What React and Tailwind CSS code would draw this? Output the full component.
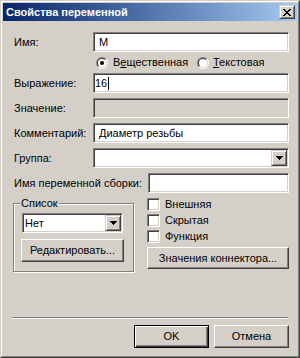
import React from "react";

const sunken =
  "border border-t-[#808080] border-l-[#808080] border-r-white border-b-white shadow-[inset_1px_1px_0_#404040,inset_-1px_-1px_0_#d4d0c8]";
const raised =
  "border border-t-white border-l-white border-r-[#404040] border-b-[#404040] shadow-[inset_-1px_-1px_0_#808080]";

function CloseGlyph() {
  const r = [
    [0, 0], [1, 0], [6, 0], [7, 0],
    [1, 1], [2, 1], [5, 1], [6, 1],
    [2, 2], [3, 2], [4, 2], [5, 2],
    [3, 3], [4, 3],
    [2, 4], [3, 4], [4, 4], [5, 4],
    [1, 5], [2, 5], [5, 5], [6, 5],
    [0, 6], [1, 6], [6, 6], [7, 6],
  ];
  return (
    <svg width="8" height="7" viewBox="0 0 8 7" shapeRendering="crispEdges">
      {r.map(([x, y], i) => (
        <rect key={i} x={x} y={y} width="1" height="1" fill="#000" />
      ))}
    </svg>
  );
}

function Arrow() {
  return (
    <svg width="7" height="4" viewBox="0 0 7 4" shapeRendering="crispEdges">
      <rect x="0" y="0" width="7" height="1" fill="#000" />
      <rect x="1" y="1" width="5" height="1" fill="#000" />
      <rect x="2" y="2" width="3" height="1" fill="#000" />
      <rect x="3" y="3" width="1" height="1" fill="#000" />
    </svg>
  );
}

function DropButton() {
  return (
    <div className="w-[16px] h-[16px] bg-[#d4d0c8] border border-t-[#d4d0c8] border-l-[#d4d0c8] border-r-[#404040] border-b-[#404040] shadow-[inset_1px_1px_0_#fff,inset_-1px_-1px_0_#808080] flex items-center justify-center">
      <Arrow />
    </div>
  );
}

function Radio({ checked }) {
  return (
    <svg width="12" height="12" viewBox="0 0 12 12" className="shrink-0">
      <path d="M1.757 10.243 A6 6 0 0 1 10.243 1.757 Z" fill="#808080" />
      <path d="M10.243 1.757 A6 6 0 0 1 1.757 10.243 Z" fill="#ffffff" />
      <path d="M2.464 9.536 A5 5 0 0 1 9.536 2.464 Z" fill="#404040" />
      <path d="M9.536 2.464 A5 5 0 0 1 2.464 9.536 Z" fill="#d4d0c8" />
      <circle cx="6" cy="6" r="4" fill="#ffffff" />
      {checked && <circle cx="6" cy="6" r="2" fill="#000" />}
    </svg>
  );
}

function Checkbox({ label }) {
  return (
    <div className="flex items-center h-[13px] gap-[5px]">
      <div className={`w-[13px] h-[13px] bg-white ${sunken}`} />
      <span>{label}</span>
    </div>
  );
}

function Row({ label, labelW = "w-[79px]", children, className = "" }) {
  return (
    <div className={`flex items-center h-[20px] ${className}`}>
      <div className={`${labelW} shrink-0`}>{label}</div>
      {children}
    </div>
  );
}

export default function App() {
  return (
    <div className="w-[300px] h-[358px] bg-[#d4d0c8] font-['Liberation_Sans',Arial,sans-serif] text-[11px] leading-none text-black select-none">
      <div className="h-full w-full border border-t-[#d4d0c8] border-l-[#d4d0c8] border-r-[#404040] border-b-[#404040]">
        <div className="h-full w-full border border-t-white border-l-white border-r-[#808080] border-b-[#808080] p-px flex flex-col">
          {/* Title bar */}
          <div className="h-[18px] shrink-0 bg-linear-to-r from-[#0a246a] to-[#a6caf0] flex items-center pl-[3px] pr-[2px]">
            <span className="text-white font-bold flex-1">Свойства переменной</span>
            <div className={`w-[16px] h-[14px] bg-[#d4d0c8] flex items-center justify-center border border-t-[#d4d0c8] border-l-[#d4d0c8] border-r-[#404040] border-b-[#404040] shadow-[inset_1px_1px_0_#fff,inset_-1px_-1px_0_#808080]`}>
              <CloseGlyph />
            </div>
          </div>

          {/* Client */}
          <div className="flex-1 flex flex-col mt-px pl-[11px] pr-[8px] pt-[10px] pb-[7px]">
            <Row label="Имя:">
              <div className={`flex-1 h-[20px] bg-white flex items-center pl-[5px] ${sunken}`}>М</div>
            </Row>

            <div className="h-[21px] flex items-center pl-[82px]">
              <div className="w-[101px] flex items-center gap-[5px]">
                <Radio checked />
                <span>
                  В<span className="underline">е</span>щественная
                </span>
              </div>
              <div className="flex items-center gap-[4px]">
                <Radio />
                <span>
                  <span className="underline">Т</span>екстовая
                </span>
              </div>
            </div>

            <Row label="Выражение:">
              <div className={`flex-1 h-[20px] bg-white flex items-center pl-[1px] ${sunken}`}>
                <span>16</span>
                <span className="w-px h-[13px] bg-black ml-[1px]" />
              </div>
            </Row>

            <Row label="Значение:" className="mt-[5px]">
              <div className={`flex-1 h-[20px] bg-[#d4d0c8] ${sunken}`} />
            </Row>

            <Row label="Комментарий:" className="mt-[5px]">
              <div className={`flex-1 h-[20px] bg-white flex items-center pl-[5px] ${sunken}`}>Диаметр резьбы</div>
            </Row>

            <Row label="Группа:" className="mt-[5px]">
              <div className={`flex-1 h-[20px] bg-white flex items-center justify-end ${sunken} p-px`}>
                <DropButton />
              </div>
            </Row>

            <Row label="Имя переменной сборки:" labelW="w-[134px]" className="mt-[5px]">
              <div className={`flex-1 h-[20px] bg-white ${sunken}`} />
            </Row>

            {/* Bottom section */}
            <div className="flex mt-[4px]">
              <div className="relative ml-[-1px] mt-[6px] w-[121px] h-[69px] border border-[#808080] shadow-[inset_1px_1px_0_#fff,1px_1px_0_#fff] pl-[8px] pt-[9px] flex flex-col">
                <span className="absolute top-[-7px] left-[6px] px-px bg-[#d4d0c8] leading-[13px]">Список</span>
                <div className={`w-[101px] h-[20px] bg-white flex items-center p-px ${sunken}`}>
                  <span className="flex-1 pl-px">Нет</span>
                  <DropButton />
                </div>
                <div className={`ml-[-1px] mt-[6px] w-[103px] h-[23px] flex items-center justify-center ${raised}`}>
                  Редактировать...
                </div>
              </div>

              <div className="flex-1 ml-[13px] pt-px flex flex-col">
                <div className="flex flex-col gap-[3px]">
                  <Checkbox label="Внешняя" />
                  <Checkbox label="Скрытая" />
                  <Checkbox label="Функция" />
                </div>
                <div className={`mt-[4px] h-[22px] flex items-center justify-center ${raised}`}>
                  Значения коннектора...
                </div>
              </div>
            </div>

            <div className="flex-1" />

            <div className="ml-[-2px] w-[276px] h-[2px] border-t border-t-[#808080] border-b border-b-white" />

            <div className="mt-[6px] flex justify-end gap-[5px]">
              <div className="w-[75px] h-[23px] flex items-center justify-center border border-black shadow-[inset_1px_1px_0_#fff,inset_-1px_-1px_0_#404040,inset_-2px_-2px_0_#808080]">
                OK
              </div>
              <div className={`w-[75px] h-[23px] flex items-center justify-center ${raised}`}>Отмена</div>
            </div>
          </div>
        </div>
      </div>
    </div>
  );
}
